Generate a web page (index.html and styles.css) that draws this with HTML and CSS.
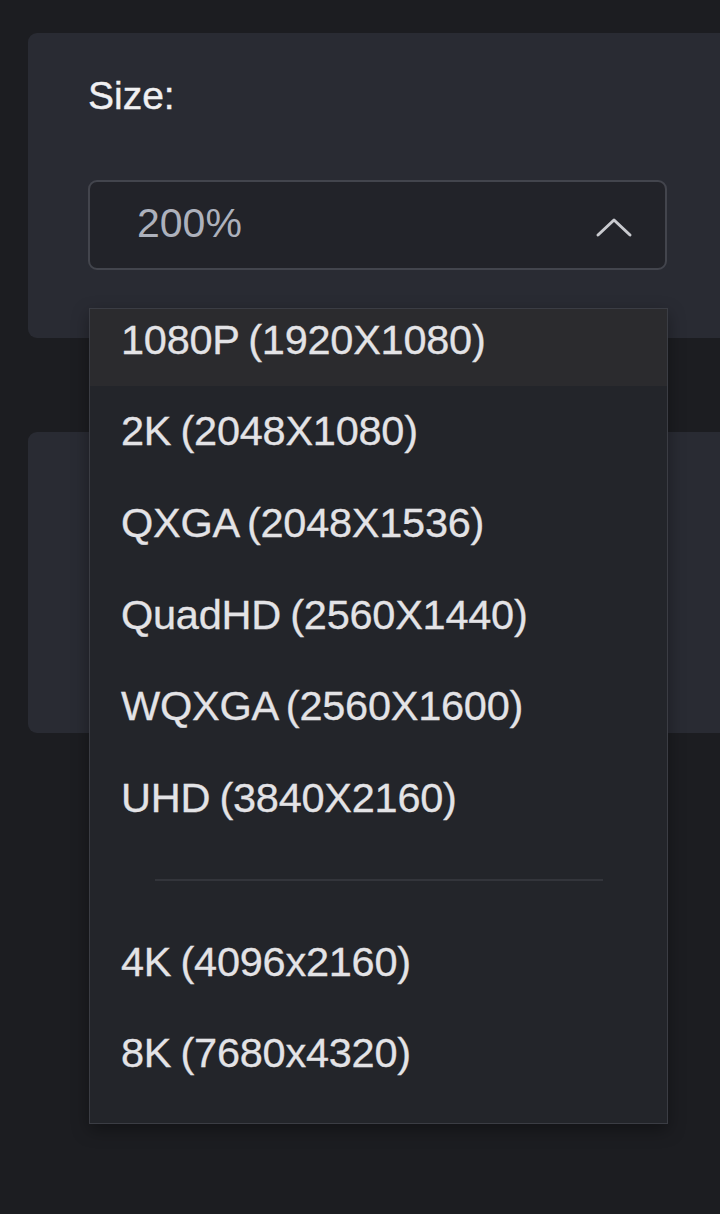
FILE: index.html
```html
<!DOCTYPE html>
<html>
<head>
<meta charset="utf-8">
<link rel="stylesheet" href="styles.css">
</head>
<body>
<div class="page">
  <section class="card card-size">
    <div class="label">Size:</div>
    <div class="select-wrap">
      <div class="select">
        <span class="select-value">200%</span>
        <svg class="chevron" width="38" height="22" viewBox="0 0 38 22">
          <path d="M3 18 L19 3 L35 18" fill="none" stroke="#c9cacf" stroke-width="3" stroke-linecap="round" stroke-linejoin="round"/>
        </svg>
      </div>
      <div class="dropdown">
        <ul class="options">
          <li class="option active">1080P (1920X1080)</li>
          <li class="option">2K (2048X1080)</li>
          <li class="option">QXGA (2048X1536)</li>
          <li class="option">QuadHD (2560X1440)</li>
          <li class="option">WQXGA (2560X1600)</li>
          <li class="option">UHD (3840X2160)</li>
          <li class="sep"><span class="sep-line"></span></li>
          <li class="option">4K (4096x2160)</li>
          <li class="option">8K (7680x4320)</li>
        </ul>
      </div>
    </div>
  </section>
  <section class="card card-second"></section>
</div>
</body>
</html>
```

FILE: styles.css
```css
html, body {
  margin: 0;
  padding: 0;
  background: #1c1d21;
  overflow: hidden;
  font-family: "Liberation Sans", Arial, sans-serif;
}

.page {
  width: 720px;
  height: 1214px;
  padding: 33px 0 0 28px;
  box-sizing: border-box;
  display: flex;
  flex-direction: column;
  gap: 94px;
}

.card {
  background: #292b33;
  border-radius: 9px 0 0 9px;
  width: 720px;
  box-sizing: border-box;
  flex: none;
}

.card-size {
  height: 305px;
  padding: 40px 0 0 60px;
  position: relative;
  z-index: 2;
}

.card-second {
  height: 301px;
}

.label {
  font-size: 39px;
  line-height: 46px;
  color: #f0f0f2;
  letter-spacing: 0;
  -webkit-text-stroke: 0.4px #f0f0f2;
}

.select-wrap {
  position: relative;
  margin-top: 61px;
  width: 579px;
}

.select {
  height: 90px;
  box-sizing: border-box;
  border: 2px solid #43454d;
  border-radius: 9px;
  background: #222329;
  display: flex;
  align-items: center;
  justify-content: space-between;
  padding: 0 32px 0 47px;
}

.select-value {
  font-size: 41px;
  color: #adb1bc;
  letter-spacing: 0;
  margin-top: -4px;
}

.chevron {
  display: block;
  margin-top: 6px;
}

.dropdown {
  position: absolute;
  top: 128px;
  left: 1px;
  width: 579px;
  height: 816px;
  box-sizing: border-box;
  border: 1.5px solid #3b3d44;
  background: #23252a;
  overflow: hidden;
  box-shadow: 0 6px 16px rgba(0, 0, 0, 0.35);
}

.options {
  list-style: none;
  margin: -15px 0 0 0;
  padding: 0;
}

.option {
  height: 91.6px;
  display: flex;
  align-items: center;
  padding-left: 31px;
  font-size: 41.5px;
  color: #e3e3e6;
  letter-spacing: -0.25px;
  word-spacing: -2px;
  -webkit-text-stroke: 0.3px #e3e3e6;
}

.option.active {
  background: #2b2b2e;
}

.sep {
  height: 72.4px;
  display: flex;
  align-items: center;
  padding: 0 64px 0 65px;
}

.sep-line {
  display: block;
  flex: 1;
  height: 2px;
  background: #33353b;
}
```
